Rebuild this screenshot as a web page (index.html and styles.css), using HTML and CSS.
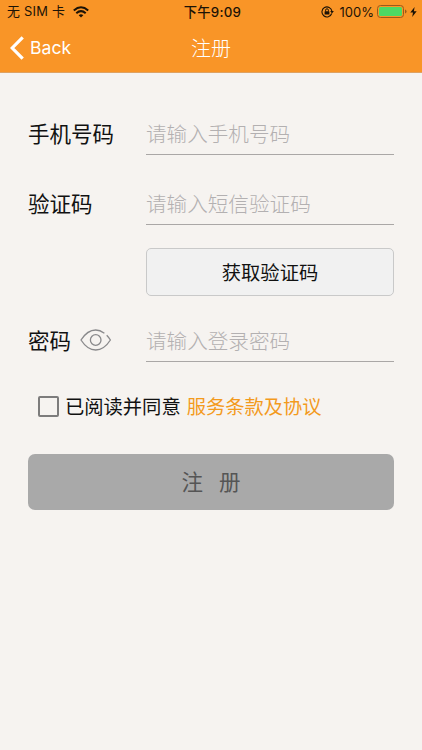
FILE: index.html
```
<!DOCTYPE html>
<html lang="zh-CN">
<head>
<meta charset="utf-8">
<title>注册</title>
<link rel="stylesheet" href="styles.css">
</head>
<body>
<header class="header">
  <div class="status">
    <div class="status-left"><span class="carrier">无 SIM 卡</span>
      <svg class="wifi" width="16" height="12" viewBox="0 0 16 12"><path d="M8 11.6 5.7 9.2Q8 7.2 10.3 9.2Z" fill="#1c1306"/><path d="M.8 4.5Q8-1.9 15.2 4.5M3.3 7.2Q8 3 12.7 7.2" fill="none" stroke="#1c1306" stroke-width="2"/></svg>
    </div>
    <div class="clock">下午9:09</div>
    <div class="status-right">
      <svg class="lock" width="13" height="12" viewBox="0 0 13 12"><path d="M10.7 7.5A5 5 0 1 1 10.9 5.2" fill="none" stroke="#1c1306" stroke-width="1.1"/><path d="M9.1 5h3.8L11 7.5Z" fill="#1c1306"/><rect x="3.6" y="5.3" width="4.8" height="3.3" rx=".4" fill="#1c1306"/><path d="M4.6 5.5V4.2a1.4 1.4 0 0 1 2.8 0v1.3" fill="none" stroke="#1c1306"/></svg>
      <span class="percent">100%</span>
      <svg class="battery" width="30" height="13" viewBox="0 0 30 13"><rect x=".5" y=".5" width="26" height="12" rx="3" fill="none" stroke="#9a5b1c"/><rect x="2" y="2" width="23" height="9" rx="1.6" fill="#4cd964"/><path d="M28 4.5q1.6.6 1.6 2T28 8.5Z" fill="#9a5b1c"/></svg>
      <svg class="bolt" width="7" height="10" viewBox="0 0 7 10"><path d="M4.6 0 .3 5.5H3L2.2 10 6.7 4.2H3.9Z" fill="#1c1306"/></svg>
    </div>
  </div>
  <nav class="nav">
    <div class="back"><svg width="14" height="24" viewBox="0 0 14 24"><path d="M12.7 1.3 2.2 12l10.5 10.7" fill="none" stroke="#fff" stroke-width="3.2"/></svg><span>Back</span></div>
    <h1 class="title">注册</h1>
  </nav>
</header>
<main class="form">
  <div class="row"><label class="label" for="phone">手机号码</label><input class="field" id="phone" placeholder="请输入手机号码"></div>
  <div class="row row-code"><label class="label" for="code">验证码</label><input class="field" id="code" placeholder="请输入短信验证码"></div>
  <button class="get-code">获取验证码</button>
  <div class="row row-password"><label class="label" for="pwd">密码<svg class="eye" width="32" height="22" viewBox="0 0 32 22"><path d="M24.4 4.2Q19.9 1 15.7 1C9.2 1 4.2 6 1 11c3.2 5 8.2 10 14.7 10s11.5-5 14.7-10q-1.6-2.7-3.7-4.8" fill="none" stroke="#89898b" stroke-width="1.3"/><circle cx="15.7" cy="11" r="5.3" fill="none" stroke="#89898b" stroke-width="1.3"/></svg></label><input class="field" id="pwd" type="password" placeholder="请输入登录密码"></div>
  <div class="agree"><span class="box"></span><span class="agree-text">已阅读并同意</span><a class="terms">服务条款及协议</a></div>
  <button class="submit"><span>注</span><span>册</span></button>
</main>
</body>
</html>
```
FILE: styles.css
```
* { box-sizing: border-box; }
body {
  margin: 0;
  height: 750px;
  overflow: hidden;
  background: #f6f3f0;
  color: #111;
  font-family: "Noto Sans CJK SC", sans-serif;
}
.header { height: 73px; background: #f99527; border-bottom: 1px solid #dea263; }
.status {
  height: 23px;
  display: grid;
  grid-template-columns: 1fr auto 1fr;
  align-items: center;
  padding: 0 5px 0 7px;
  color: #1c1306;
  font: 13px/22px Inter, "Noto Sans CJK SC", sans-serif;
}
.status-left, .status-right { display: flex; align-items: center; }
.status-right { justify-content: flex-end; }
.carrier { font-size: 12.9px; letter-spacing: .25px; width: 59px; white-space: nowrap; }
.wifi { margin-left: 7px; }
.clock { font-weight: 500; font-size: 13.3px; letter-spacing: .25px; padding-left: 1px; }
.percent { margin: 0 3px 0 7px; font-size: 13px; }
.lock { margin-right: -1px; }
.bolt { margin-left: 3px; }
.nav {
  height: 49px;
  display: grid;
  grid-template-columns: 1fr auto 1fr;
  align-items: center;
  color: #fff;
}
.back { display: flex; align-items: center; gap: 6px; padding-left: 10px; font: 17.6px/24px Inter, sans-serif; }
.title { margin: 0; font-size: 20px; font-weight: 300; line-height: 30px; }
.form { padding: 38px 28px 0; }
.row { display: flex; height: 44px; }
.label {
  width: 118px;
  display: flex;
  align-items: center;
  font-size: 21.5px;
  line-height: 44px;
}
.field {
  width: 248px;
  height: 44px;
  padding: 1px 0 0;
  border: 0;
  border-bottom: 1px solid #aaa7a6;
  border-radius: 0;
  outline: 0;
  background: none;
  font: 300 20.6px/30px "Noto Sans CJK SC", sans-serif;
}
.field::placeholder { color: #b3b0b1; opacity: 1; }
.row-code { margin-top: 26px; }
.get-code {
  display: block;
  width: 248px;
  height: 48px;
  margin: 23px 0 0 118px;
  padding: 0;
  border: 1px solid #c9c9c9;
  border-radius: 5px;
  background: #f1f1f1;
  color: #111;
  font: 19.3px/30px "Noto Sans CJK SC", sans-serif;
}
.row-password { margin-top: 22px; }
.eye { margin-left: 9px; }
.agree { display: flex; align-items: center; height: 30px; margin-top: 29px; padding-left: 10px; font-size: 19.3px; line-height: 30px; }
.box { width: 21px; height: 21px; border: 2px solid #7d7c7c; border-radius: 2px; }
.agree-text { margin-left: 6px; }
.terms { margin-left: 6px; color: #f39a1d; }
.submit {
  display: flex;
  justify-content: center;
  align-items: center;
  gap: 16px;
  width: 366px;
  height: 56px;
  margin-top: 33px;
  padding: 0 0 2px;
  border: 0;
  border-radius: 7px;
  background: #a9a9a9;
  color: #555;
  font: 21.5px/32px "Noto Sans CJK SC", sans-serif;
}
```
